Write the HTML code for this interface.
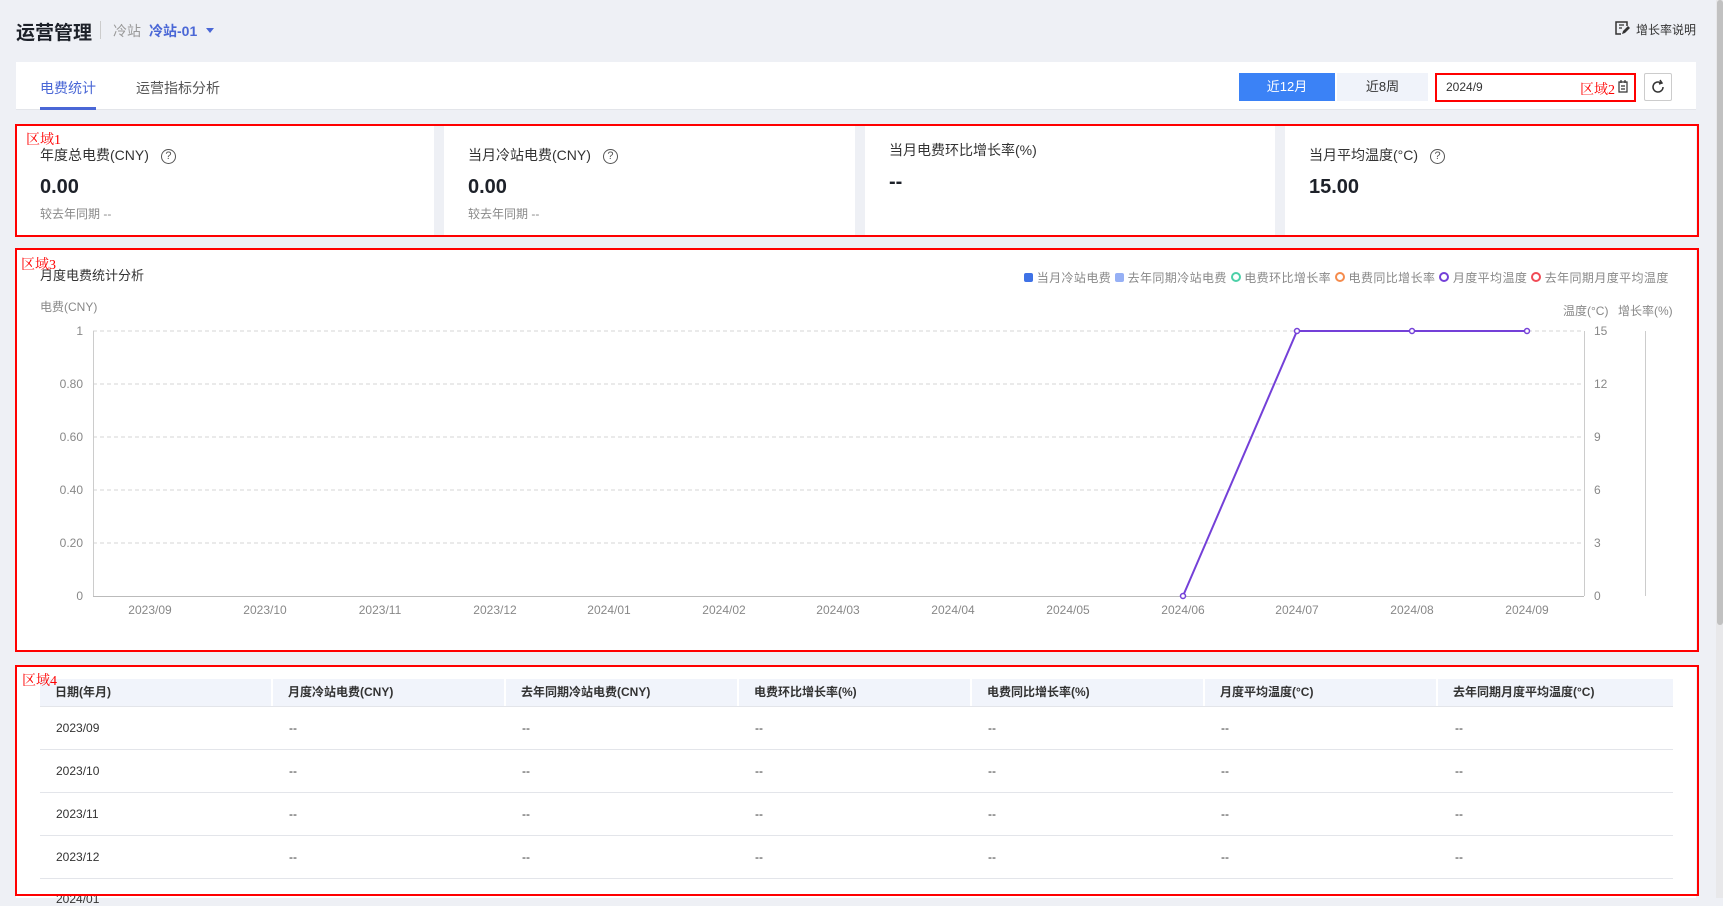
<!DOCTYPE html>
<html><head><meta charset="utf-8"><style>
*{margin:0;padding:0;box-sizing:border-box}
body{width:1723px;height:898px;overflow:hidden;background:#eef0f5;font-family:"Liberation Sans","Noto Sans CJK SC",sans-serif;color:#333;position:relative}
.a{position:absolute;white-space:nowrap}
.w{position:absolute;background:#fff}
.red{position:absolute;border:2px solid #f00}
.rl{position:absolute;color:#f00;font-size:14px;font-family:"Liberation Serif","Noto Serif CJK SC",serif}
.lab{font-size:14px;color:#333}
.val{font-size:20px;font-weight:bold;color:#1d2129}
.sub{font-size:12px;color:#888}
.q{display:inline-block;width:15px;height:15px;border:1.5px solid #555;border-radius:50%;font-size:11px;text-align:center;line-height:12px;color:#555;margin-left:12px;vertical-align:1px}
.th{position:absolute;top:679px;height:27px;background:#f1f4fb;font-size:12px;font-weight:bold;color:#333;line-height:27px;padding-left:15px;border-right:2px solid #fff;white-space:nowrap}
.td{position:absolute;font-size:12px;color:#333;white-space:nowrap}
.hl{position:absolute;left:40px;width:1633px;height:1px;background:#e3e5ea}
</style></head><body>
<div class="a" style="left:16px;top:18px;font-size:19px;font-weight:bold;color:#1d2129">运营管理</div>
<div class="a" style="left:100px;top:21px;width:1px;height:18px;background:#ccc"></div>
<div class="a" style="left:113px;top:21px;font-size:14px;color:#999">冷站</div>
<div class="a" style="left:149px;top:21px;font-size:14px;font-weight:bold;color:#4a67d6">冷站-01</div>
<div class="a" style="left:206px;top:28px;width:0;height:0;border-left:4px solid transparent;border-right:4px solid transparent;border-top:5px solid #4a67d6"></div>
<svg class="a" style="left:1614px;top:20px" width="16" height="16" viewBox="0 0 16 16"><path d="M13 6V2H2v12h5" fill="none" stroke="#333" stroke-width="1.5"/><path d="M5 5h5M5 8h3" stroke="#333" stroke-width="1.3"/><path d="M8 14l1-3 5-5 2 2-5 5z" fill="#333"/></svg>
<div class="a" style="left:1636px;top:21px;font-size:12px;color:#333">增长率说明</div>
<div class="a" style="left:1716px;top:0;width:7px;height:898px;background:#e8e8ea"></div>
<div class="a" style="left:1717px;top:0;width:6px;height:625px;background:#c1c1c1;border-radius:3px"></div>

<div class="w" style="left:16px;top:62px;width:1680px;height:48px;border-bottom:1px solid #e3e5ea"></div>
<div class="a" style="left:40px;top:78px;font-size:14px;color:#4a67d6">电费统计</div>
<div class="a" style="left:40px;top:107px;width:56px;height:3px;background:#4a67d6"></div>
<div class="a" style="left:136px;top:78px;font-size:14px;color:#555">运营指标分析</div>
<div class="a" style="left:1239px;top:73px;width:96px;height:28px;background:#3b82f6;color:#fff;font-size:13px;text-align:center;line-height:28px">近12月</div>
<div class="a" style="left:1337px;top:73px;width:91px;height:28px;background:#f0f3fa;color:#333;font-size:13px;text-align:center;line-height:28px">近8周</div>
<div class="a" style="left:1446px;top:80px;font-size:12px;color:#333">2024/9</div>
<div class="a" style="left:1644px;top:73px;width:28px;height:28px;border:1px solid #ccc;border-radius:2px"></div>
<svg class="a" style="left:1650px;top:79px" width="16" height="16" viewBox="0 0 16 16"><path d="M13 8a5 5 0 1 1-2-4" fill="none" stroke="#333" stroke-width="1.5"/><path d="M10 1l2 3-3 1" fill="none" stroke="#333" stroke-width="1.5"/></svg>
<div class="red" style="left:1435px;top:73px;width:201px;height:29px"></div>
<div class="rl" style="left:1580px;top:79px">区域2</div>
<svg class="a" style="left:1618px;top:80px" width="10" height="13" viewBox="0 0 10 13"><path d="M1 2h8v10H1zM3 0v3M7 0v3M3 6h4M3 9h4" fill="none" stroke="#333" stroke-width="1.2"/></svg>

<div class="w" style="left:16px;top:124px;width:418px;height:112px"></div>
<div class="w" style="left:444px;top:124px;width:411px;height:112px"></div>
<div class="w" style="left:865px;top:124px;width:410px;height:112px"></div>
<div class="w" style="left:1285px;top:124px;width:411px;height:112px"></div>
<div class="a lab" style="left:40px;top:145px">年度总电费(CNY)<span class="q">?</span></div>
<div class="a val" style="left:40px;top:176px">0.00</div>
<div class="a sub" style="left:40px;top:205px">较去年同期 --</div>
<div class="a lab" style="left:468px;top:145px">当月冷站电费(CNY)<span class="q">?</span></div>
<div class="a val" style="left:468px;top:176px">0.00</div>
<div class="a sub" style="left:468px;top:205px">较去年同期 --</div>
<div class="a lab" style="left:889px;top:140px">当月电费环比增长率(%)</div>
<div class="a val" style="left:889px;top:171px">--</div>
<div class="a lab" style="left:1309px;top:145px">当月平均温度(°C)<span class="q">?</span></div>
<div class="a val" style="left:1309px;top:176px">15.00</div>
<div class="red" style="left:15px;top:124px;width:1684px;height:113px"></div>
<div class="rl" style="left:26px;top:129px">区域1</div>

<div class="w" style="left:16px;top:248px;width:1680px;height:403px"></div>
<div class="a" style="left:40px;top:265px;font-size:13px;color:#333">月度电费统计分析</div>
<div class="a" style="left:40px;top:298px;font-size:12px;color:#888">电费(CNY)</div>
<div class="a" style="left:1563px;top:302px;font-size:12px;color:#888">温度(°C)</div>
<div class="a" style="left:1618px;top:302px;font-size:12px;color:#888">增长率(%)</div>
<div class="a" style="left:1024px;top:269px;font-size:12px;color:#888;letter-spacing:0.4px">
<span style="display:inline-block;width:9px;height:9px;background:#3f72e6;border-radius:2px"></span> 当月冷站电费
<span style="display:inline-block;width:9px;height:9px;background:#96b0f5;border-radius:2px"></span> 去年同期冷站电费
<span style="display:inline-block;width:10px;height:10px;border:2px solid #4cd0a8;border-radius:50%"></span> 电费环比增长率
<span style="display:inline-block;width:10px;height:10px;border:2px solid #f58b4c;border-radius:50%"></span> 电费同比增长率
<span style="display:inline-block;width:10px;height:10px;border:2px solid #7440d8;border-radius:50%"></span> 月度平均温度
<span style="display:inline-block;width:10px;height:10px;border:2px solid #f04a55;border-radius:50%"></span> 去年同期月度平均温度</div>
<svg class="a" style="left:0;top:0" width="1723" height="898">
<g stroke="#d6d6d6" stroke-dasharray="4 3">
<line x1="93" y1="331" x2="1584" y2="331"/><line x1="93" y1="384" x2="1584" y2="384"/><line x1="93" y1="437" x2="1584" y2="437"/><line x1="93" y1="490" x2="1584" y2="490"/><line x1="93" y1="543" x2="1584" y2="543"/></g>
<line x1="93" y1="596.5" x2="1584" y2="596.5" stroke="#bbb"/>
<line x1="93.5" y1="331" x2="93.5" y2="596" stroke="#ccc"/>
<line x1="1584.5" y1="331" x2="1584.5" y2="596" stroke="#ccc"/>
<line x1="1645.5" y1="331" x2="1645.5" y2="596" stroke="#ccc"/>
<g font-family="Liberation Sans" font-size="12" fill="#888" text-anchor="end">
<text x="83" y="335">1</text><text x="83" y="388">0.80</text><text x="83" y="441">0.60</text><text x="83" y="494">0.40</text><text x="83" y="547">0.20</text><text x="83" y="600">0</text></g>
<g font-family="Liberation Sans" font-size="12" fill="#888">
<text x="1594" y="335">15</text><text x="1594" y="388">12</text><text x="1594" y="441">9</text><text x="1594" y="494">6</text><text x="1594" y="547">3</text><text x="1594" y="600">0</text></g>
<g font-family="Liberation Sans" font-size="12" fill="#888" text-anchor="middle">
<text x="150" y="614">2023/09</text><text x="265" y="614">2023/10</text><text x="380" y="614">2023/11</text><text x="495" y="614">2023/12</text><text x="609" y="614">2024/01</text><text x="724" y="614">2024/02</text><text x="838" y="614">2024/03</text><text x="953" y="614">2024/04</text><text x="1068" y="614">2024/05</text><text x="1183" y="614">2024/06</text><text x="1297" y="614">2024/07</text><text x="1412" y="614">2024/08</text><text x="1527" y="614">2024/09</text></g>
<polyline points="1183,596 1297,331 1412,331 1527,331" fill="none" stroke="#7440d8" stroke-width="2"/>
<g fill="#fff" stroke="#7440d8" stroke-width="1.5"><circle cx="1183" cy="596" r="2.5"/><circle cx="1297" cy="331" r="2.5"/><circle cx="1412" cy="331" r="2.5"/><circle cx="1527" cy="331" r="2.5"/></g>
</svg>
<div class="red" style="left:15px;top:248px;width:1684px;height:404px"></div>
<div class="rl" style="left:21px;top:254px">区域3</div>

<div class="w" style="left:16px;top:665px;width:1680px;height:233px"></div>
<div class="th" style="left:40px;width:233px">日期(年月)</div>
<div class="th" style="left:273px;width:233px">月度冷站电费(CNY)</div>
<div class="th" style="left:506px;width:233px">去年同期冷站电费(CNY)</div>
<div class="th" style="left:739px;width:233px">电费环比增长率(%)</div>
<div class="th" style="left:972px;width:233px">电费同比增长率(%)</div>
<div class="th" style="left:1205px;width:233px">月度平均温度(°C)</div>
<div class="th" style="left:1438px;width:235px;border-right:0">去年同期月度平均温度(°C)</div>
<div class="hl" style="top:706px"></div>
<div class="hl" style="top:749px"></div>
<div class="hl" style="top:792px"></div>
<div class="hl" style="top:835px"></div>
<div class="hl" style="top:878px"></div>
<div class="td" style="left:56px;top:721px">2023/09</div>
<div class="td" style="left:56px;top:764px">2023/10</div>
<div class="td" style="left:56px;top:807px">2023/11</div>
<div class="td" style="left:56px;top:850px">2023/12</div>
<div class="td" style="left:56px;top:892px">2024/01</div>
<div class="td" style="left:289px;top:721px">--</div><div class="td" style="left:522px;top:721px">--</div><div class="td" style="left:755px;top:721px">--</div><div class="td" style="left:988px;top:721px">--</div><div class="td" style="left:1221px;top:721px">--</div><div class="td" style="left:1455px;top:721px">--</div>
<div class="td" style="left:289px;top:764px">--</div><div class="td" style="left:522px;top:764px">--</div><div class="td" style="left:755px;top:764px">--</div><div class="td" style="left:988px;top:764px">--</div><div class="td" style="left:1221px;top:764px">--</div><div class="td" style="left:1455px;top:764px">--</div>
<div class="td" style="left:289px;top:807px">--</div><div class="td" style="left:522px;top:807px">--</div><div class="td" style="left:755px;top:807px">--</div><div class="td" style="left:988px;top:807px">--</div><div class="td" style="left:1221px;top:807px">--</div><div class="td" style="left:1455px;top:807px">--</div>
<div class="td" style="left:289px;top:850px">--</div><div class="td" style="left:522px;top:850px">--</div><div class="td" style="left:755px;top:850px">--</div><div class="td" style="left:988px;top:850px">--</div><div class="td" style="left:1221px;top:850px">--</div><div class="td" style="left:1455px;top:850px">--</div>
<div class="red" style="left:15px;top:665px;width:1684px;height:231px"></div>
<div class="rl" style="left:22px;top:670px">区域4</div>
</body></html>
